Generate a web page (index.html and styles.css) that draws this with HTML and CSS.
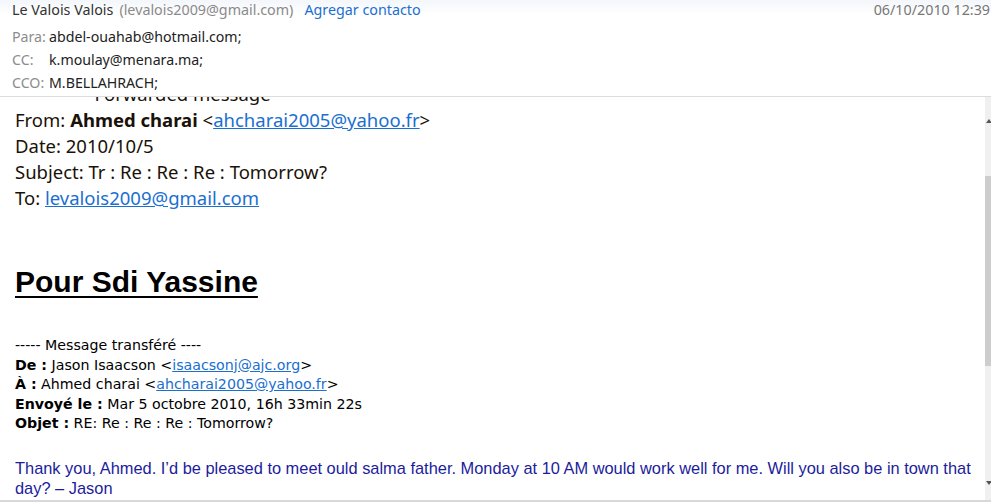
FILE: index.html
```html
<!DOCTYPE html>
<html>
<head>
<meta charset="utf-8">
<link rel="stylesheet" href="styles.css">
</head>
<body>
<div class="app">
  <header class="head">
    <div class="row top">
      <span class="name">Le Valois Valois</span>
      <span class="addr">(levalois2009@gmail.com)</span>
      <a class="add">Agregar contacto</a>
      <span class="date">06/10/2010 12:39</span>
    </div>
    <div class="row field first"><span class="lbl">Para:</span><span class="val">abdel-ouahab@hotmail.com;</span></div>
    <div class="row field"><span class="lbl">CC:</span><span class="val">k.moulay@menara.ma;</span></div>
    <div class="row field"><span class="lbl">CCO:</span><span class="val">M.BELLAHRACH;</span></div>
  </header>
  <div class="viewport">
    <div class="content">
      <div class="fwd">
        <div class="cut"><div class="fline"><span class="dash">----------</span> Forwarded message <span class="dash">----------</span></div></div>
        <div class="fline">From: <b>Ahmed charai</b> &lt;<a class="lnk">ahcharai2005@yahoo.fr</a>&gt;</div>
        <div class="fline">Date: 2010/10/5</div>
        <div class="fline">Subject: Tr : Re : Re : Re : Tomorrow?</div>
        <div class="fline">To: <a class="lnk">levalois2009@gmail.com</a></div>
      </div>
      <h1 class="title">Pour Sdi Yassine</h1>
      <div class="trans">
        <div>----- Message transféré ----</div>
        <div><b>De :</b> Jason Isaacson &lt;<a class="lnk">isaacsonj@ajc.org</a>&gt;</div>
        <div><b>À :</b> Ahmed charai &lt;<a class="lnk">ahcharai2005@yahoo.fr</a>&gt;</div>
        <div><b>Envoyé le :</b> Mar 5 octobre 2010, 16h 33min 22s</div>
        <div><b>Objet :</b> RE: Re : Re : Re : Tomorrow?</div>
      </div>
      <p class="msg">Thank you, Ahmed. I’d be pleased to meet ould salma father. Monday at 10 AM would work well for me. Will you also be in town that day? – Jason</p>
    </div>
    <div class="sbar">
      <div class="arrow up"></div>
      <div class="track"><div class="thumb"></div></div>
      <div class="arrow down"></div>
    </div>
  </div>
</div>
</body>
</html>
```
FILE: styles.css
```css
html, body { margin: 0; padding: 0; background: #fff; }
.app { width: 991px; height: 502px; display: flex; flex-direction: column; overflow: hidden; }
.head {
  height: 97px;
  box-sizing: border-box;
  border-bottom: 1px solid #dcdcdc;
  background: linear-gradient(#f3f6fb 0px, #ffffff 14px);
  font-family: "Noto Sans", "Open Sans", sans-serif;
  padding: 0 1px 0 12px;
}
.row { display: flex; align-items: baseline; white-space: nowrap; }
.top { height: 22px; font-size: 14.3px; line-height: 20px; }
.name { color: #333; }
.addr { color: #8a8a8a; margin-left: 6px; }
.add { color: #1b6fd1; margin-left: 11px; }
.date { color: #777; margin-left: auto; }
.field { height: 23px; line-height: 23px; font-size: 14.2px; }
.field.first { margin-top: 3px; }
.lbl { color: #8c8c8c; width: 37px; flex: none; }
.val { color: #222; }

.viewport { flex: 1; display: flex; overflow: hidden; border-bottom: 2px solid #d8d8d8; }
.content { flex: 1; overflow: hidden; padding: 0 0 0 15px; }
.fwd { font-family: "Noto Sans", "Open Sans", sans-serif; font-size: 18.5px; color: #1a1208; line-height: 26px; }
.cut { height: 10px; overflow: hidden; display: flex; flex-direction: column; justify-content: flex-end; }
.cut .fline { flex: none; white-space: nowrap; }
.dash { letter-spacing: 1.5px; }
.fwd b { font-weight: 700; }
.lnk { color: #1a6fd0; text-decoration: underline; }
.title {
  font-family: "Liberation Sans", Arial, sans-serif;
  font-size: 30px; font-weight: 700; color: #000;
  text-decoration: underline; text-decoration-thickness: 2px; text-underline-offset: 4px;
  margin: 55px 0 0 0; line-height: 32px;
}
.trans { font-family: "DejaVu Sans", sans-serif; font-size: 14.2px; color: #000; line-height: 19.6px; margin-top: 38px; }
.msg { font-family: "Liberation Sans", Arial, sans-serif; font-size: 16.4px; color: #1c1c9c; line-height: 20px; margin: 24px 0 0 0; width: 960px; }

.sbar { width: 6px; flex: none; background: #f0f0f0; display: flex; flex-direction: column; }
.arrow { height: 79px; position: relative; }
.arrow.up::after { content: ""; position: absolute; left: 1px; top: 22px; border: 3px solid transparent; border-bottom: 4px solid #555; border-top: 0; }
.arrow.down { height: 133px; }
.arrow.down::after { content: ""; position: absolute; left: 1px; bottom: 14px; border: 3px solid transparent; border-top: 4px solid #555; border-bottom: 0; }
.track { height: 190px; }
.thumb { height: 100%; background: #cdcdcd; }
```
